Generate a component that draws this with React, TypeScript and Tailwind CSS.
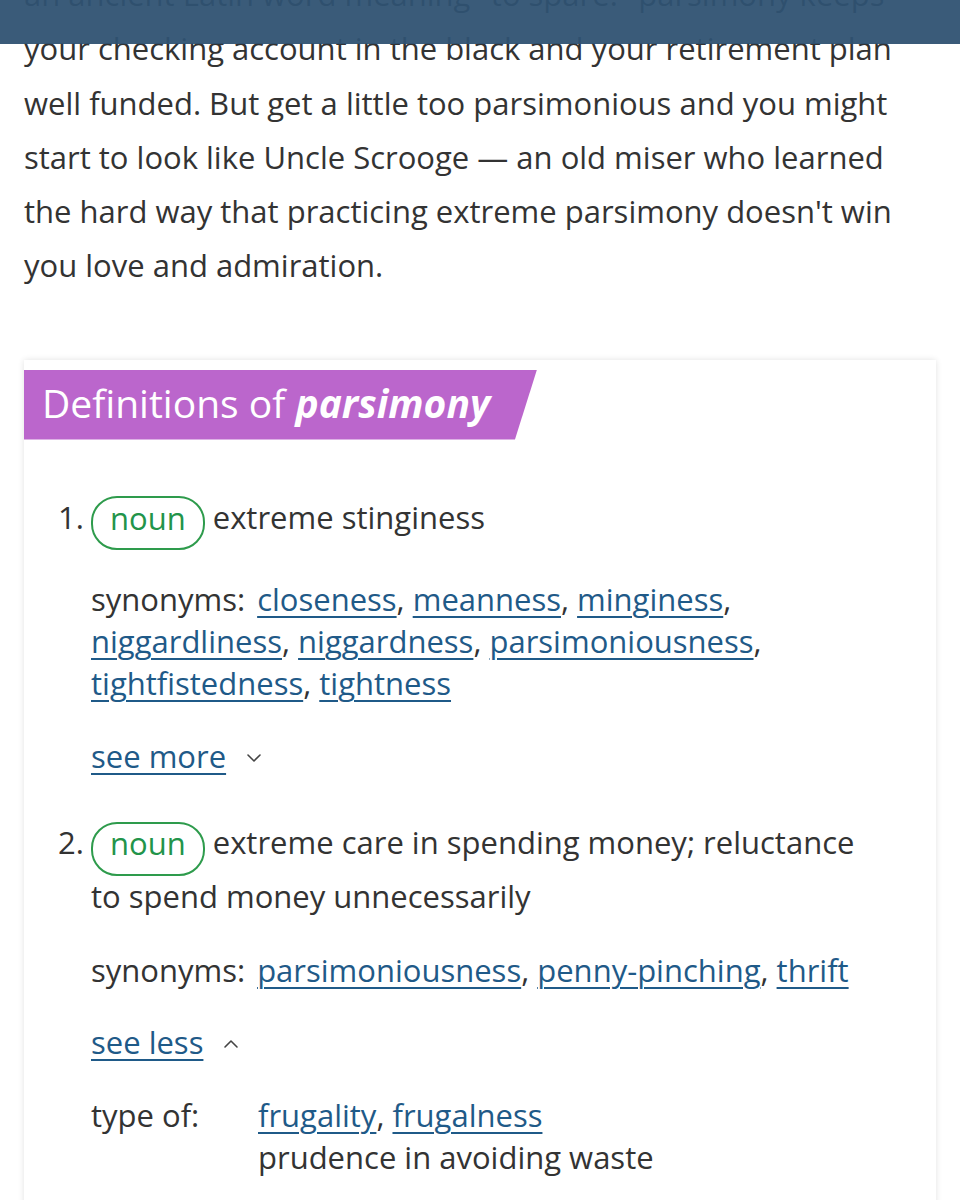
import { ChevronDown, ChevronUp } from 'lucide-react'

const font = { fontFamily: '"Open Sans", "Noto Sans", sans-serif' }

function Link({ children }: { children: React.ReactNode }) {
  return (
    <a href="#" className="text-[#1f5a88] underline decoration-[2px] underline-offset-[5px]">
      {children}
    </a>
  )
}

function Synonyms({ words }: { words: string[] }) {
  return (
    <p className="leading-[42px]">
      <span className="mr-3">synonyms:</span>
      {words.map((w, i) => (
        <span key={w}>
          <Link>{w}</Link>
          {i < words.length - 1 ? ', ' : ''}
        </span>
      ))}
    </p>
  )
}

function Noun() {
  return (
    <span className="my-[-2px] inline-flex h-[54px] translate-y-[3px] items-center rounded-[26px] border-2 border-[#2e9b4c] px-[17px] pb-[10px] align-middle leading-none text-[#22944a]">
      noun
    </span>
  )
}

export default function App() {
  return (
    <div className="relative min-h-[1200px] overflow-hidden bg-white text-[#333]" style={font}>
      <div className="absolute left-0 right-0 top-0 z-10 h-[44px] bg-[#2f5272]/[0.95]" />

      <p className="mt-[-33px] px-6 text-[31px] leading-[54.25px]">
        an ancient Latin word meaning "to spare." parsimony keeps
        <br />
        your checking account in the black and your retirement plan
        <br />
        well funded. But get a little too parsimonious and you might
        <br />
        start to look like Uncle Scrooge — an old miser who learned
        <br />
        the hard way that practicing extreme parsimony doesn't win
        <br />
        you love and admiration.
      </p>

      <div className="mx-6 mt-[67px] pt-[10px] pb-12 pr-[56px] shadow-[0_0_6px_rgba(0,0,0,0.12)]">
        <h2
          className="h-[70px] w-[513px] bg-[#bb66cc] pl-[18px] text-[39px] leading-[66px] text-white"
          style={{ clipPath: 'polygon(0 0, 100% 0, 95.7% 100%, 0 100%)' }}
        >
          Definitions of <b className="font-bold italic">parsimony</b>
        </h2>

        <ol className="mt-[50px] text-[31px]">
          <li className="flex pl-[34px]">
            <span className="w-[33px] shrink-0 leading-[54px]">1.</span>
            <div className="flex-1">
              <p className="leading-[54px]">
                <Noun /> extreme stinginess
              </p>
              <div className="mt-[33px]">
                <Synonyms
                  words={[
                    'closeness',
                    'meanness',
                    'minginess',
                    'niggardliness',
                    'niggardness',
                    'parsimoniousness',
                    'tightfistedness',
                    'tightness',
                  ]}
                />
              </div>
              <p className="mt-[31px] flex items-center leading-[42px]">
                <Link>see more</Link>
                <ChevronDown className="ml-[16px] mt-1 h-6 w-6 text-[#444]" strokeWidth={1.6} />
              </p>
            </div>
          </li>

          <li className="mt-[40px] flex pl-[34px]">
            <span className="w-[33px] shrink-0 leading-[50px]">2.</span>
            <div className="flex-1">
              <p className="leading-[50px]">
                <Noun /> extreme care in spending money; reluctance to spend money unnecessarily
              </p>
              <div className="mt-[28px]">
                <Synonyms words={['parsimoniousness', 'penny-pinching', 'thrift']} />
              </div>
              <p className="mt-[30px] flex items-center leading-[42px]">
                <Link>see less</Link>
                <ChevronUp className="ml-[16px] mt-1 h-6 w-6 text-[#444]" strokeWidth={1.6} />
              </p>
              <div className="mt-[31px] flex leading-[42px]">
                <span className="w-[167px] shrink-0">type of:</span>
                <div>
                  <p>
                    <Link>frugality</Link>, <Link>frugalness</Link>
                  </p>
                  <p>prudence in avoiding waste</p>
                </div>
              </div>
            </div>
          </li>
        </ol>
      </div>
    </div>
  )
}
